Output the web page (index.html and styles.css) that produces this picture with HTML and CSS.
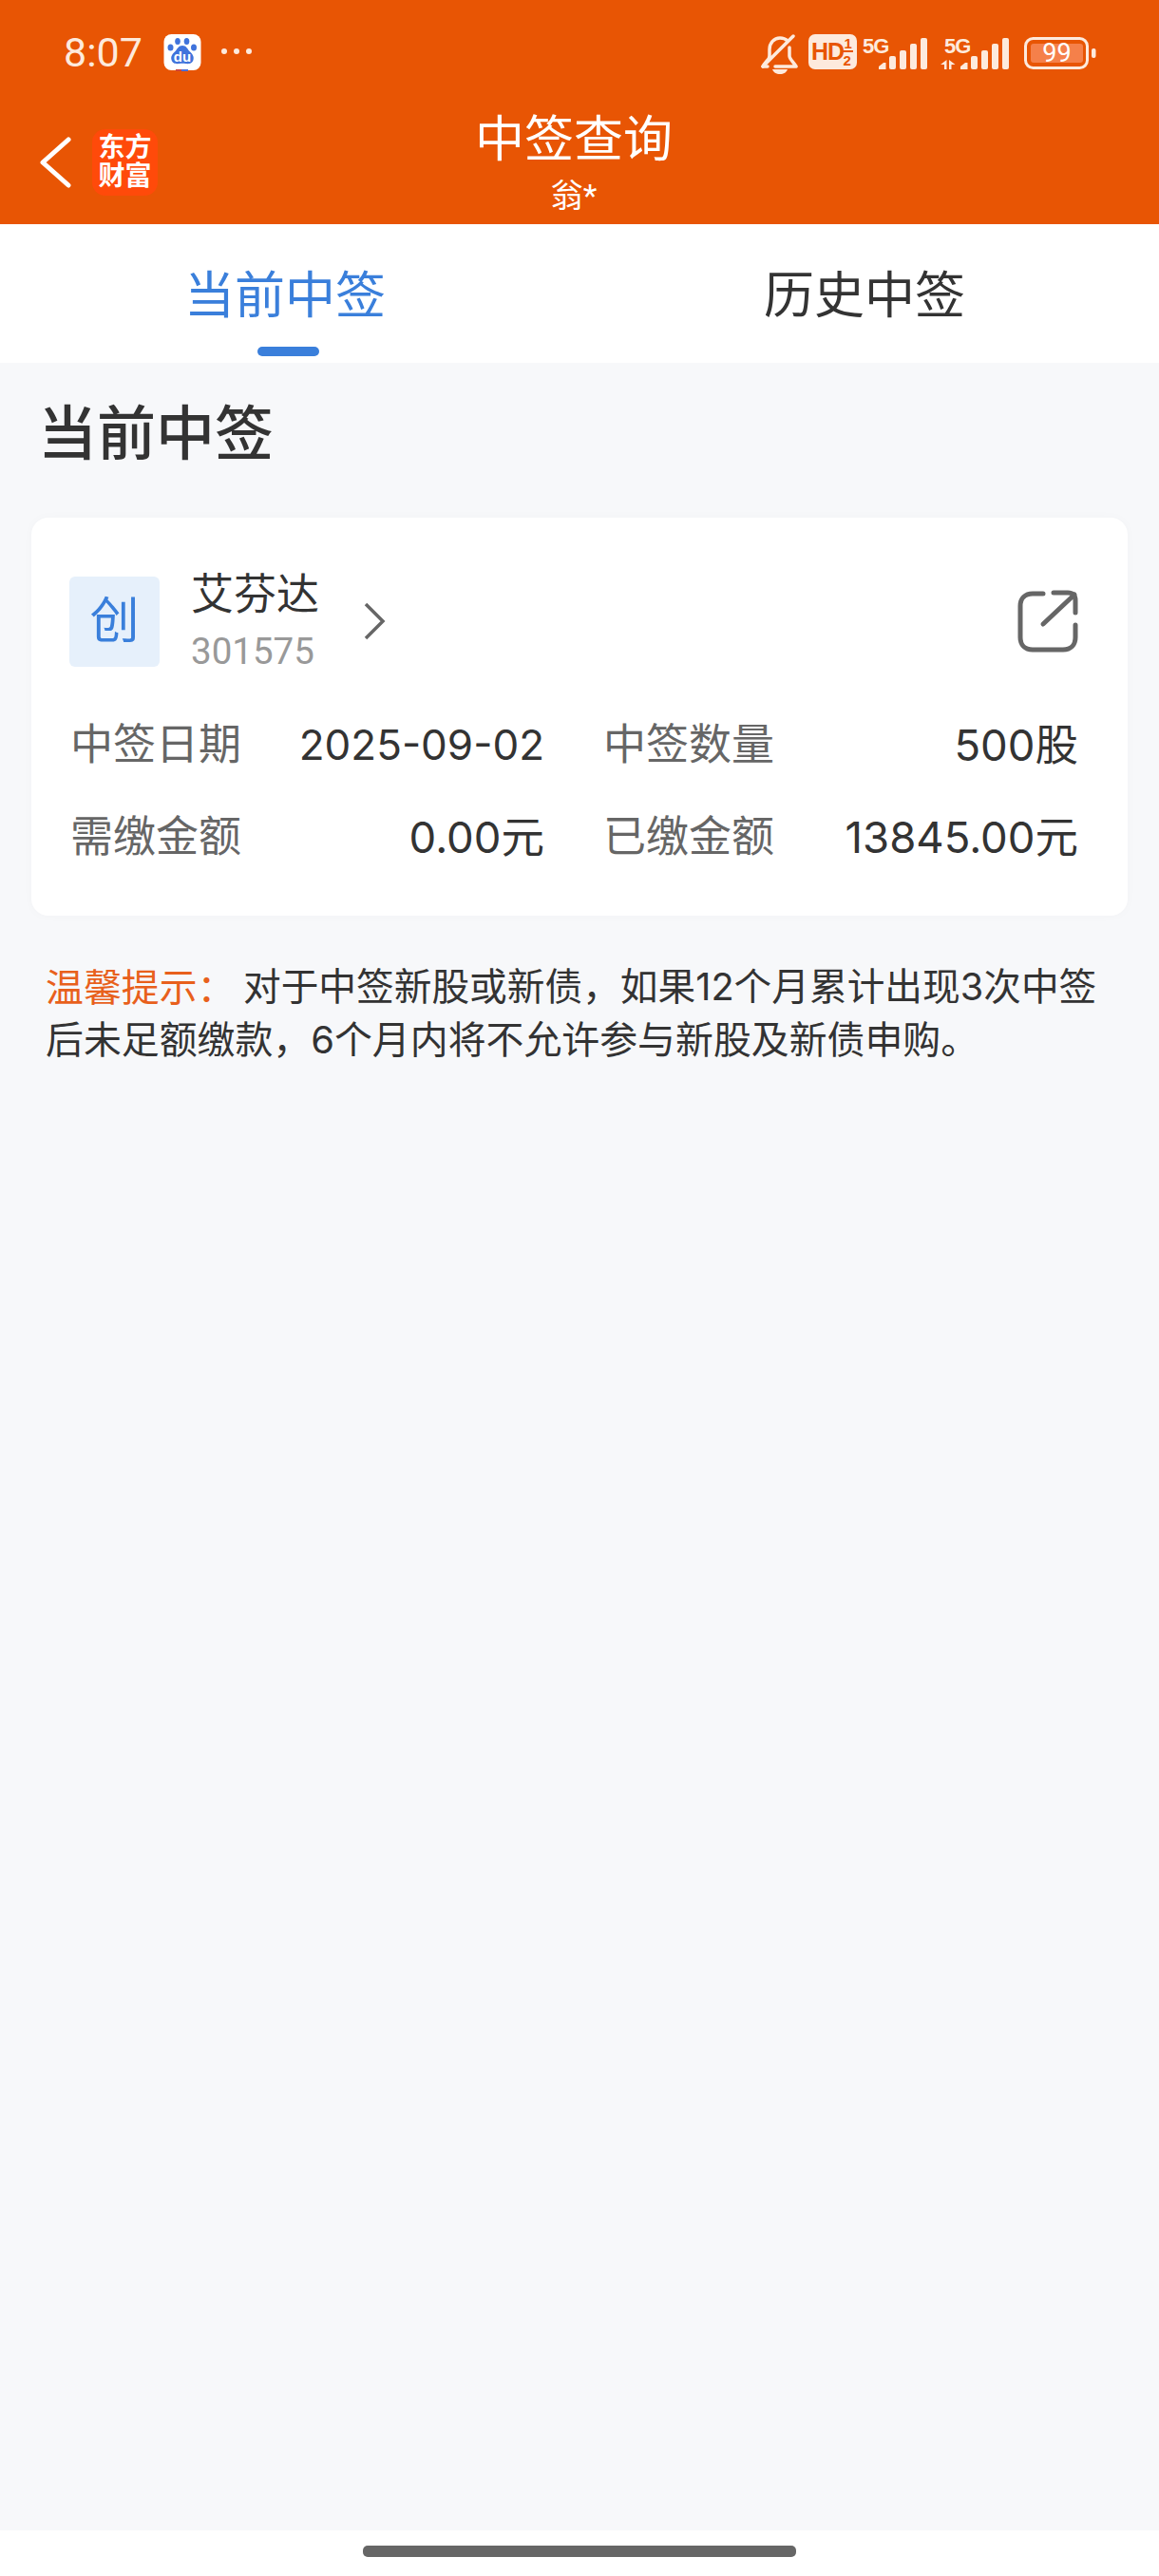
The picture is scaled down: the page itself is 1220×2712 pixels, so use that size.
FILE: index.html
```html
<!DOCTYPE html>
<html lang="zh-CN">
<head>
<meta charset="utf-8">
<title>中签查询</title>
<link rel="stylesheet" href="styles.css">
</head>
<body>
<header class="header">
  <div class="status">
    <span class="time">8:07</span>
    <svg class="baidu" width="40" height="40" viewBox="0 0 40 40">
      <rect x="0.5" y="0" width="39" height="38" rx="8" fill="#fff"/>
      <rect x="13" y="37" width="6" height="2" fill="#d0453a"/>
      <rect x="19" y="37" width="7" height="2" fill="#4a6fd8"/>
      <g fill="#3f73dc">
        <ellipse cx="7.500" cy="14" rx="3" ry="3.500"/>
        <ellipse cx="15" cy="7.500" rx="2.800" ry="3.500"/>
        <ellipse cx="24.500" cy="7.500" rx="2.800" ry="3.500"/>
        <ellipse cx="32" cy="14" rx="3" ry="3.500"/>
        <path d="M20 12c4 0 5 3 7.500 6 3 3 5 5 4 9-1 4-5 4.500-8 4-2-.3-5-.3-7 0-3 .5-7 0-8-4-1-4 1-6 4-9 2.500-3 3.500-6 7.500-6z"/>
      </g>
      <text class="baidu-du" x="20" y="29" text-anchor="middle">du</text>
    </svg>
    <svg class="dots" width="32" height="8" viewBox="0 0 32 8">
      <circle cx="3" cy="4" r="3"/><circle cx="16" cy="4" r="3"/><circle cx="29" cy="4" r="3"/>
    </svg>
    <div class="status-right">
      <svg class="bell" width="40" height="42" viewBox="0 0 40 42" fill="none" stroke="#fdeadd" stroke-width="3.500" stroke-linecap="round" stroke-linejoin="round">
        <path d="M10 24V16C10 9 15 4 21 4c3 0 6 1 8 3"/>
        <path d="M31 14v9c0 3 4 6 7 11H16"/>
        <path d="M10 24c-1 3-5 6-7 10h5"/>
        <path d="M3 34L35 2"/>
        <path d="M13 37h16c-1 3-4 5-8 5s-7-2-8-5z" fill="#fdeadd" stroke="none"/>
      </svg>
      <svg class="hd" width="51" height="37" viewBox="0 0 51 37">
        <rect width="51" height="37" rx="7" fill="#fdeadd"/>
        <text class="hd-main" x="3" y="27">HD</text>
        <text class="hd-sm" x="37.500" y="15">1</text>
        <text class="hd-sm" x="36.500" y="33">2</text>
        <rect x="36" y="17" width="11" height="2" fill="#e85504"/>
      </svg>
      <svg class="signal sig-a" width="68" height="42" viewBox="0 -6 68 42">
        <text class="five-g" x="0" y="17">5G</text>
        <path class="bar" d="M17 34v-3l5-4h2.500v7z"/>
        <rect class="bar" x="28" y="20" width="7" height="14" rx="2"/>
        <rect class="bar" x="39" y="14" width="7" height="20" rx="2"/>
        <rect class="bar" x="50" y="7" width="7" height="27" rx="2"/>
        <rect class="bar" x="61" y="1" width="7" height="33" rx="2"/>
      </svg>
      <svg class="signal sig-b" width="72" height="42" viewBox="0 -6 72 42">
        <text class="five-g" x="4" y="17">5G</text>
        <path class="bar" d="M6.500 24v10h-2.500v-5H0zM9 34V24l6.500 5H11.500v5z"/>
        <path class="bar" d="M21 34v-3l5-4h2.500v7z"/>
        <rect class="bar" x="32" y="20" width="7" height="14" rx="2"/>
        <rect class="bar" x="43" y="14" width="7" height="20" rx="2"/>
        <rect class="bar" x="54" y="7" width="7" height="27" rx="2"/>
        <rect class="bar" x="65" y="1" width="7" height="33" rx="2"/>
      </svg>
      <svg class="battery" width="76" height="34" viewBox="0 0 76 34">
        <rect x="1.500" y="1.500" width="65" height="31" rx="8" fill="none" stroke="#fdeadd" stroke-width="3"/>
        <rect x="7" y="7" width="55" height="20" rx="3" fill="#f5804a"/>
        <rect x="71" y="12" width="4.500" height="10" rx="2" fill="#fdeadd"/>
        <text class="bat-text" x="34.500" y="26" text-anchor="middle">99</text>
      </svg>
    </div>
  </div>
  <div class="nav">
    <div class="nav-left">
      <svg class="back" width="34" height="54" viewBox="0 0 34 54" fill="none" stroke="#fff" stroke-width="5" stroke-linecap="round" stroke-linejoin="round">
        <path d="M30 3L3 27l27 24"/>
      </svg>
      <div class="logo"><span>东方</span><span>财富</span></div>
    </div>
    <div class="nav-title">
      <div class="title">中签查询</div>
      <div class="subtitle">翁*</div>
    </div>
    <div></div>
  </div>
</header>

<nav class="tabs">
  <div class="tab tab-active"><span class="tab-text">当前中签</span><i class="tab-line"></i></div>
  <div class="tab"><span class="tab-text">历史中签</span><i class="tab-line tab-line-off"></i></div>
</nav>

<main class="main">
  <h1 class="heading">当前中签</h1>
  <section class="card">
    <div class="card-head">
      <div class="tile">创</div>
      <div class="stock">
        <div class="stock-name">艾芬达</div>
        <div class="stock-code">301575</div>
      </div>
      <svg class="chev" width="24" height="40" viewBox="0 0 24 40" fill="none" stroke="#666" stroke-width="3.500">
        <path d="M3 2l18 18L3 38"/>
      </svg>
      <svg class="share" width="64" height="66" viewBox="0 0 64 66" fill="none" stroke="#666" stroke-width="5" stroke-linecap="round">
        <path d="M27 4H16C8 4 3 9 3 17v33c0 8 5 13 13 13h32c8 0 13-5 13-13V37"/>
        <path d="M27 36L60 5"/>
        <path d="M38 3h15c5 0 8 3 8 8v13"/>
      </svg>
    </div>
    <div class="grid">
      <div class="pair"><span class="label">中签日期</span><span class="value value-date">2025-09-02</span></div>
      <div class="pair"><span class="label">中签数量</span><span class="value">500股</span></div>
      <div class="pair"><span class="label">需缴金额</span><span class="value">0.00元</span></div>
      <div class="pair"><span class="label">已缴金额</span><span class="value">13845.00元</span></div>
    </div>
  </section>
  <div class="notice">
    <div class="notice-line"><span class="notice-key">温馨提示：</span><span class="notice-first">对于中签新股或新债，如果12个月累计出现3次中签</span></div>
    <div class="notice-line">后未足额缴款，6个月内将不允许参与新股及新债申购。</div>
  </div>
</main>

<footer class="home"><i class="home-bar"></i></footer>
</body>
</html>
```

FILE: styles.css
```css
* { box-sizing: border-box; }
html, body { margin: 0; padding: 0; }
body {
  width: 1220px;
  height: 2712px;
  display: flex;
  flex-direction: column;
  background: #fff;
  font-family: "Roboto", "Noto Sans CJK SC", sans-serif;
  color: #333;
}

.header { height: 236px; background: #e85504; color: #fff; flex: none; }

.status {
  height: 110px;
  padding: 36px 66px 0 67px;
  display: flex;
  align-items: flex-start;
  color: #fdeadd;
}
.time { font-size: 43px; line-height: 38px; width: 83px; }
.baidu { margin-left: 22px; }
.baidu-du { font: 700 15px "Liberation Sans", sans-serif; fill: #fff; }
.dots { margin: 14px 0 0 21px; fill: #fdeadd; }

.status-right { margin-left: auto; display: flex; align-items: flex-start; }
.hd { margin-left: 11px; }
.hd-main { font: 700 25px "Liberation Sans", sans-serif; fill: #e85504; letter-spacing: -1px; }
.hd-sm { font: 700 15px "Liberation Sans", sans-serif; fill: #e85504; }
.sig-a { margin: -3px 0 0 6px; }
.sig-b { margin: -3px 0 0 14px; }
.five-g { font: 700 22px "Liberation Sans", sans-serif; fill: #fdeadd; letter-spacing: -1px; }
.bar { fill: #fdeadd; }
.battery { margin: 3px 0 0 16px; }
.bat-text { font: 400 27px "Roboto", sans-serif; fill: #fff; }

.nav {
  height: 126px;
  display: grid;
  grid-template-columns: 1fr auto 1fr;
  padding-right: 12px;
}
.nav-left { display: flex; align-items: flex-start; padding: 25px 0 0 42px; }
.back { margin-top: 9px; }
.logo {
  margin: 1px 0 0 21px;
  width: 69px;
  height: 70px;
  background: #ff4a0a;
  border-radius: 14px;
  display: flex;
  flex-direction: column;
  align-items: center;
  justify-content: center;
  font-size: 28px;
  line-height: 30px;
  font-weight: 700;
  white-space: nowrap;
}
.nav-title { text-align: center; }
.title { font-size: 52px; line-height: 70px; padding-top: 3px; }
.subtitle { font-size: 34px; line-height: 46px; }

.tabs {
  height: 146px;
  flex: none;
  background: #fff;
  display: grid;
  grid-template-columns: 600px 620px;
}
.tab { display: flex; flex-direction: column; align-items: center; padding-top: 37px; color: #333; }
.tab-text { font-size: 53px; line-height: 78px; }
.tab-line { display: block; width: 65px; height: 10px; border-radius: 5px; margin: 14px 0 0 7px; background: #3a7fdb; }
.tab-line-off { background: transparent; }
.tab-active { color: #3a7fdb; }

.main { flex: 1; background: #f7f8fa; padding: 0 33px; }
.heading { margin: 0; padding: 41px 0 0 7px; font-size: 62px; line-height: 70px; font-weight: 500; color: #333; }

.card {
  margin-top: 52px;
  height: 419px;
  background: #fff;
  border-radius: 18px;
  box-shadow: 0 0 12px rgba(0, 0, 0, 0.025);
  padding: 50px 52px 0 40px;
}
.card-head { display: flex; align-items: center; height: 118px; }
.tile {
  width: 95px;
  height: 95px;
  border-radius: 6px;
  background: #e6f0fb;
  color: #3a7fdb;
  font-size: 52px;
  line-height: 95px;
  text-align: center;
}
.stock { margin-left: 33px; width: 136px; padding-top: 4px; }
.stock-name { font-size: 45px; line-height: 60px; color: #333; }
.stock-code { font-size: 38.5px; line-height: 58px; color: #999; white-space: nowrap; }
.chev { margin: 0 0 0 45px; }
.share { margin-left: auto; }

.grid {
  margin-top: 23px;
  padding-left: 1px;
  display: grid;
  grid-template-columns: 499px 500px;
  column-gap: 62px;
}
.pair { display: flex; justify-content: space-between; font-size: 45px; line-height: 97px; }
.label { color: #666; }
.value { color: #333; font-family: "Inter", "Noto Sans CJK SC", sans-serif; font-size: 45.5px; }
.value-date { font-size: 44px; }

.notice {
  margin: 48px 0 0 15px;
  font-family: "Inter", "Noto Sans CJK SC", sans-serif;
  font-size: 39.9px;
  line-height: 55px;
  color: #333;
}
.notice-line { display: flex; white-space: nowrap; }
.notice-key { color: #e8601c; width: 208px; }
.notice-first { font-size: 39.7px; }

.home { height: 48px; flex: none; background: #fff; padding-top: 16px; display: flex; justify-content: center; }
.home-bar { display: block; width: 456px; height: 12px; border-radius: 5px; background: #666; }
```
